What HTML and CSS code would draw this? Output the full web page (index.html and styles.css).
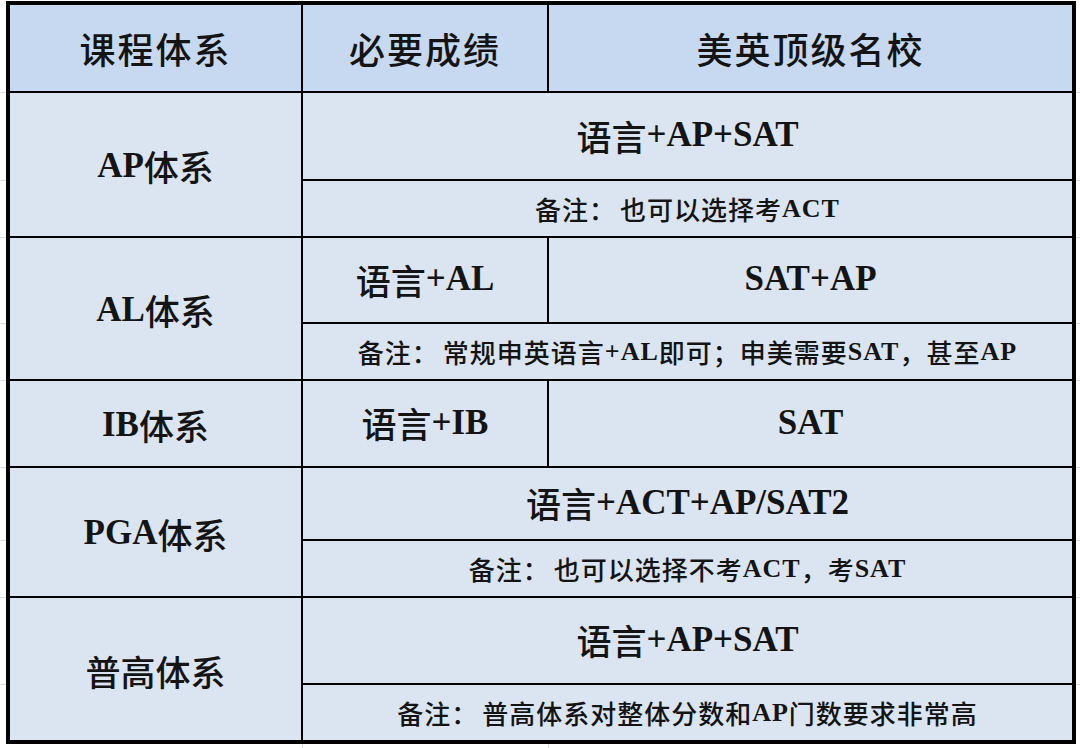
FILE: index.html
```html
<!DOCTYPE html>
<html lang="zh-CN">
<head>
<meta charset="utf-8">
<title>课程体系</title>
<link rel="stylesheet" href="styles.css">
</head>
<body>
<div class="sheet">
  <div class="grid">
    <div class="cell head c1">课程体系</div>
    <div class="cell head c2">必要成绩</div>
    <div class="cell head c3">美英顶级名校</div>

    <div class="cell label ap"><span class="en">AP</span>体系</div>
    <div class="cell main wide ap-main">语言<span class="en">+AP+SAT</span></div>
    <div class="cell note wide ap-note">备注：<span class="sp"></span>也可以选择考<span class="en">ACT</span></div>

    <div class="cell label al"><span class="en">AL</span>体系</div>
    <div class="cell main c2 al-main">语言<span class="en">+AL</span></div>
    <div class="cell main c3 al-main"><span class="en">SAT+AP</span></div>
    <div class="cell note wide al-note">备注：<span class="sp"></span>常规申英语言<span class="en">+AL</span>即可；申美需要<span class="en">SAT</span>，甚至<span class="en">AP</span></div>

    <div class="cell label ib"><span class="en">IB</span>体系</div>
    <div class="cell main c2 ib">语言<span class="en">+IB</span></div>
    <div class="cell main c3 ib"><span class="en">SAT</span></div>

    <div class="cell label pga"><span class="en">PGA</span>体系</div>
    <div class="cell main wide pga-main">语言<span class="en">+ACT+AP/SAT2</span></div>
    <div class="cell note wide pga-note">备注：<span class="sp"></span>也可以选择不考<span class="en">ACT</span>，考<span class="en">SAT</span></div>

    <div class="cell label pg">普高体系</div>
    <div class="cell main wide pg-main">语言<span class="en">+AP+SAT</span></div>
    <div class="cell note wide pg-note">备注：<span class="sp"></span>普高体系对整体分数和<span class="en">AP</span>门数要求非常高</div>
  </div>
</div>
</body>
</html>
```

FILE: styles.css
```css
html, body {
  margin: 0;
  padding: 0;
  background: #ffffff;
}
body {
  width: 1080px;
  height: 748px;
  overflow: hidden;
  background:
    linear-gradient(#dcdcdc, #dcdcdc) 0 92px / 1080px 1px no-repeat,
    linear-gradient(#dcdcdc, #dcdcdc) 0 180px / 1080px 1px no-repeat,
    linear-gradient(#dcdcdc, #dcdcdc) 0 237px / 1080px 1px no-repeat,
    linear-gradient(#dcdcdc, #dcdcdc) 0 323px / 1080px 1px no-repeat,
    linear-gradient(#dcdcdc, #dcdcdc) 0 380px / 1080px 1px no-repeat,
    linear-gradient(#dcdcdc, #dcdcdc) 0 467px / 1080px 1px no-repeat,
    linear-gradient(#dcdcdc, #dcdcdc) 0 540px / 1080px 1px no-repeat,
    linear-gradient(#dcdcdc, #dcdcdc) 0 597px / 1080px 1px no-repeat,
    linear-gradient(#dcdcdc, #dcdcdc) 0 684px / 1080px 1px no-repeat,
    linear-gradient(#dcdcdc, #dcdcdc) 302px 0 / 1px 748px no-repeat,
    linear-gradient(#dcdcdc, #dcdcdc) 548px 0 / 1px 748px no-repeat,
    #ffffff;
}
.sheet {
  padding: 1px 0 0 6px;
}
.grid {
  display: grid;
  width: 1062px;
  grid-template-columns: 291px 244px 523px;
  grid-template-rows: 86px 86px 55px 84px 55px 85px 71px 55px 85px 55px;
  gap: 2px;
  background: #000000;
  border: 4px solid #000000;
  font-family: "Liberation Serif", "Noto Sans CJK SC", serif;
  font-weight: 500;
  color: #141414;
}
.cell {
  display: flex;
  align-items: center;
  justify-content: center;
  background: #dbe5f1;
  white-space: nowrap;
}
.en {
  font-weight: 700;
}
.sp {
  display: inline-block;
  width: 4px;
}
.head {
  background: #c6d9f0;
  font-size: 36px;
  letter-spacing: 2px;
  grid-row: 1;
}
.c1 { grid-column: 1; }
.c2 { grid-column: 2; }
.c3 { grid-column: 3; }
.wide { grid-column: 2 / 4; }
.label {
  grid-column: 1;
  font-size: 35px;
  padding-top: 2px;
}
.main {
  font-size: 35px;
  padding-bottom: 2px;
}
.note {
  font-size: 26px;
  letter-spacing: 1px;
}
.ap { grid-row: 2 / 4; }
.ap-main { grid-row: 2; }
.ap-note { grid-row: 3; }
.al { grid-row: 4 / 6; }
.al-main { grid-row: 4; }
.al-note { grid-row: 5; }
.ib { grid-row: 6; }
.pga { grid-row: 7 / 9; }
.pga-main { grid-row: 7; }
.pga-note { grid-row: 8; }
.pg { grid-row: 9 / 11; }
.pg-main { grid-row: 9; }
.pg-note { grid-row: 10; }
```
